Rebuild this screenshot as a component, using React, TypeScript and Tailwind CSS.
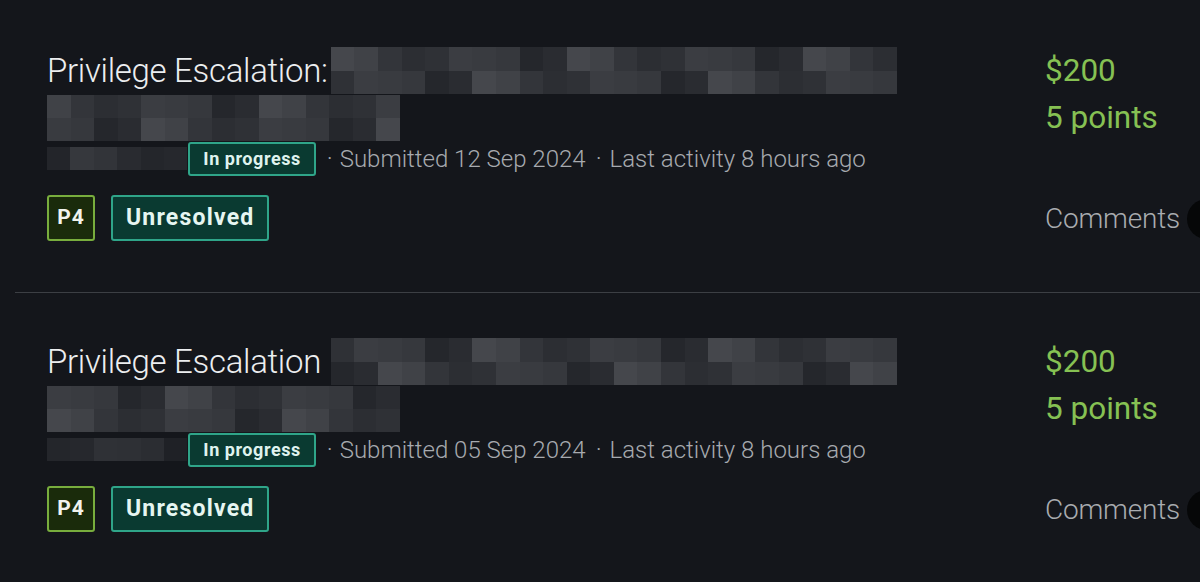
import React from "react";

const SHADES = ["#2a2c31", "#33353a", "#3b3d42", "#25272c", "#404247", "#2f3136", "#36383d", "#45474c", "#2c2e33", "#393b40"];

function Mosaic({ cols, rows, cell = 24, seed = 1, fade = false }: { cols: number; rows: number; cell?: number; seed?: number; fade?: boolean }) {
  const cells: string[] = [];
  let s = seed * 9301 + 49297;
  for (let i = 0; i < cols * rows; i++) {
    s = (s * 9301 + 49297) % 233280;
    cells.push(SHADES[s % SHADES.length]);
  }
  return (
    <div
      className={`grid shrink-0 ${fade ? "opacity-70" : ""}`}
      style={{ gridTemplateColumns: `repeat(${cols}, ${cell}px)`, gridAutoRows: `${cell - 0.5}px` }}
    >
      {cells.map((c, i) => (
        <div key={i} style={{ backgroundColor: c }} />
      ))}
    </div>
  );
}

function Card({ title, date, seed, last }: { title: string; date: string; seed: number; last?: boolean }) {
  return (
    <div className={`flex pl-[32px] pt-[45px] pb-[51px] ${last ? "" : "border-b border-[#3c3f44]"}`}>
      <div className="flex-1 flex flex-col">
        <div className="flex items-center h-[47px]">
          <span className="text-[33px] font-light text-[#eceef0] leading-none tracking-[-0.3px]">{title}</span>
          <div className="ml-auto mr-[148px]">
            <Mosaic cols={24} rows={2} cell={23.6} seed={seed} />
          </div>
        </div>
        <div className="h-[47px] flex items-center">
          <Mosaic cols={15} rows={2} cell={23.5} seed={seed + 7} />
        </div>
        <div className="flex items-center h-[35px]">
          <Mosaic cols={6} rows={1} cell={23.4} seed={seed + 3} fade />
          <span className="ml-px inline-flex items-center h-[34px] px-[13px] rounded-[3px] border-2 border-[#2fa589] bg-[#0a3a31] text-[#dff3ee] text-[18px] font-bold tracking-[0.55px]">
            In progress
          </span>
          <span className="text-[24px] font-light text-[#a7aaaf] flex items-center">
            <span className="ml-[11px] mr-[7px]">·</span>
            <span>Submitted {date}</span>
            <span className="ml-[10px] mr-[8px]">·</span>
            <span>Last activity 8 hours ago</span>
          </span>
        </div>
        <div className="flex items-center gap-[16px] mt-[19px]">
          <span className="inline-flex items-center justify-center w-[48px] h-[46px] rounded-[3px] border-2 border-[#78ad3d] bg-[#1a2b0b] text-[#f1f4ee] text-[21px] font-bold tracking-[1px]">
            P4
          </span>
          <span className="inline-flex items-center h-[46px] px-[13px] rounded-[3px] border-2 border-[#2fa589] bg-[#0a3a31] text-[#e6f6f1] text-[23px] font-bold tracking-[1.2px]">
            Unresolved
          </span>
        </div>
      </div>
      <div className="w-[155px] flex flex-col justify-between shrink-0">
        <div className="flex flex-col">
          <span className="h-[47px] flex items-center text-[31.5px] text-[#86c153] tracking-[0px]">$200</span>
          <span className="h-[47px] flex items-center text-[31.5px] text-[#86c153] tracking-[0px]">5 points</span>
        </div>
        <div className="flex items-center gap-[7px] h-[46px] pt-[2px]">
          <span className="text-[28px] font-light text-[#a9acb0] tracking-[-0.2px]">Comments</span>
          <div className="w-[40px] h-[40px] rounded-full bg-[#060708] shrink-0" />
        </div>
      </div>
    </div>
  );
}

export default function App() {
  return (
    <div className="w-[1200px] h-[582px] overflow-hidden bg-[#14161b] font-['Roboto',sans-serif] pt-[2px] pl-[15px]">
      <Card title="Privilege Escalation:" date="12 Sep 2024" seed={3} />
      <Card title="Privilege Escalation" date="05 Sep 2024" seed={11} last />
    </div>
  );
}
